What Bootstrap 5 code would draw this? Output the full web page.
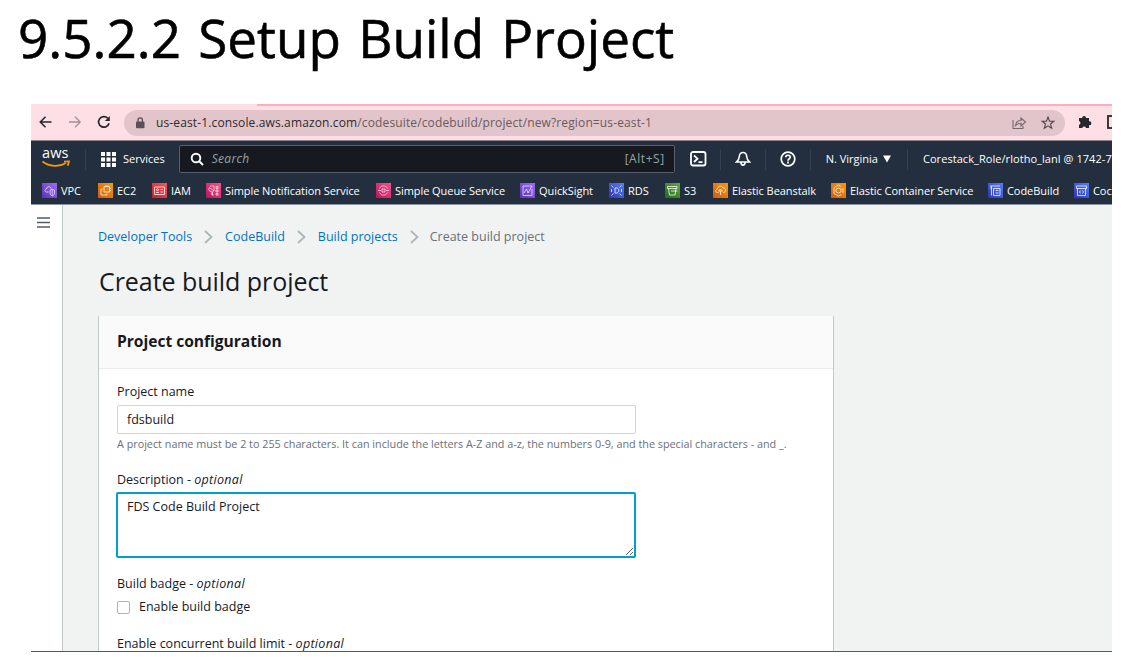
<!DOCTYPE html>
<html lang="en">
<head>
<meta charset="utf-8">
<title>Setup Build Project</title>
<link href="https://cdn.jsdelivr.net/npm/bootstrap@5.3.0/dist/css/bootstrap.min.css" rel="stylesheet">
<style>
body{font-family:"Open Sans","Noto Sans",sans-serif;font-size:12.5px;line-height:18px;color:#16191f;background:#fff;overflow:hidden}
svg{display:block;flex:none}
.slide-title{font-size:53px;font-weight:500;line-height:76px;height:104px;padding-left:18px;color:#000;white-space:nowrap;word-spacing:3.5px;-webkit-text-stroke:.6px #000}
.shot{margin-left:31px;width:1081px;height:548px;border-bottom:1px solid #545b64;white-space:nowrap}
.browser{height:36px;background:linear-gradient(90deg,transparent 226px,#ffadba 226px) top/100% 2px no-repeat #ffdfe6;padding-left:7px}
.address{flex:none;width:941px;height:26px;border-radius:13px;background:#e1c5ca;font-size:12px;letter-spacing:.13px;color:#6a5a5e;margin-left:12px;margin-top:2px;padding:0 9px 0 10px}
.aws{background:#232f3e;border-top:1px solid #8b7f8b;border-bottom:1px solid #8d96a0;height:65px;color:#fff;font-weight:500;font-size:11px}
.top-row{height:36px}
.top-row>*{flex:none}
.logo{width:30px;height:26px;margin-left:10px;font-size:14.5px;line-height:14px;letter-spacing:.1px;padding-left:1px}
.logo svg{margin-left:-1px}
.find{width:496px;height:28px;margin-left:14px;background:#161a20;border:1px solid #56616e;border-radius:2px;padding:0 9px 0 10px;font-size:12px;font-weight:400;color:#95a5a6}
.rule{width:1px;height:21px;background:#35414e}
.favs{height:27px;grid-template-columns:56px 54px 54px 170px 144px 89px 56px 48px 118px 157px 86px 38px;padding-left:11px;padding-top:6px;letter-spacing:-.06px}
.favs>span{display:flex;align-items:center;height:15px}
.favs svg{margin-right:4px;stroke-opacity:.85}
.side{width:32px;border-right:1px solid #c3c8c8;padding:12px 0 0 6px}
.main{background:#f1f3f3;padding:23px 0 0 35px}
.crumbs a{color:#0073bb;text-decoration:none}
.crumbs{color:#687078;height:18px}
.crumbs svg{margin:0 12px}
.crumbs svg:last-of-type{margin-right:11px}
em{letter-spacing:.3px}
h1{font-size:25px;font-weight:400;line-height:34px;margin:18px 0 18px 1px;letter-spacing:-.05px}
.panel{width:736px;height:335px;border:1px solid #c3c8c8;border-width:0 1px;background:#fff}
.panel-head{height:53px;background:#fafafa;border-bottom:1px solid #eaeded;padding:16px 18px;font-size:15.6px;font-weight:700;letter-spacing:-.02px}
.panel-body{padding:14px 18px 0}
.panel-body .form-control{width:519px;font-size:12.5px;line-height:18px;color:#16191f;border-radius:2px;padding:4px 9px}
.name-box{height:29px;border-color:#cfd5d9;margin-top:4px}
.panel-body .desc-box{width:520px;height:66px;margin:3px 0 0 -1px;border:2px solid #00a1c9;box-shadow:none;padding:4px 9px 2px}
.hint{font-size:10.8px;line-height:16px;color:#687078;margin-top:2px}
.panel-body .form-check-input{width:13px;height:13px;margin:0;border:1px solid #aab7b8;border-radius:2px}
</style>
</head>
<body>
<div class="slide-title">9.5.2.2 Setup Build Project</div>
<div class="shot d-flex flex-column overflow-hidden">
  <div class="browser d-flex align-items-center flex-shrink-0">
    <svg width="16" height="16" viewBox="0 0 16 16" fill="none" stroke="#25282d" stroke-width="1.6"><path d="M13.500 8H2.500M7.500 2.800 2.300 8l5.200 5.200"/></svg>
    <svg style="margin:0 14px 0 14px" width="14" height="16" viewBox="0 0 14 16" fill="none" stroke="#a58f96" stroke-width="1.300"><path d="M1 8h11M7 2.800 12.200 8 7 13.200"/></svg>
    <svg width="16" height="16" viewBox="0 0 16 16"><path d="M13 9.200A5.300 5.300 0 1 1 11.800 4.300" fill="none" stroke="#25282d" stroke-width="1.700"/><path d="M13.800 2v5H8.800z" fill="#25282d"/></svg>
    <div class="address d-flex align-items-center">
      <svg width="12" height="14" viewBox="0 0 12 14"><rect x="2" y="5.500" width="8.500" height="6.800" rx="1" fill="#5b5055"/><path d="M4 6V4a2.200 2.200 0 0 1 4.400 0v2" fill="none" stroke="#5b5055" stroke-width="1.300"/></svg>
      <span class="me-auto" style="margin-left:10px"><span style="color:#33282c">us-east-1.console.aws.amazon.com</span>/codesuite/codebuild/project/new?region=us-east-1</span>
      <svg width="16" height="16" viewBox="0 0 16 16" fill="none" stroke="#75686c" stroke-width="1.100"><path d="M2 5v8.500h10V11M4.500 10.500c.5-3.500 2.500-5 5.500-5V3l4.500 4-4.500 4V8.300c-2.500 0-4 .7-5.500 2.200z"/></svg>
      <svg style="margin-left:13px" width="16" height="16" viewBox="0 0 16 16" fill="none" stroke="#51464a" stroke-width="1.100"><path d="m8 2 1.500 4.100 4.400.2-3.400 2.700 1.200 4.200L8 10.800l-3.700 2.400L5.500 9 2.100 6.300l4.400-.2z"/></svg>
    </div>
    <svg style="margin-left:12px" width="16" height="16" viewBox="0 0 16 16" fill="#25282d"><path d="M2 4h3.200a1.900 1.900 0 1 1 3.800 0H12v3.400a1.900 1.900 0 1 1 0 3.700V14H9a1.900 1.900 0 0 0-3.700 0H2v-3.200a1.900 1.900 0 0 0 0-3.700z"/></svg>
    <svg style="margin-left:14px" width="14" height="14" viewBox="0 0 14 14" fill="none" stroke="#25282d" stroke-width="1.800"><rect x="1" y="1" width="12" height="12"/></svg>
  </div>
  <div class="aws flex-shrink-0">
    <div class="top-row d-flex align-items-center">
      <div class="logo">aws<svg width="30" height="8" viewBox="0 0 30 8"><path d="M1.500 1.500c7 5.500 17 5.500 23.500 1.500M23 1.500l5-.2-1.300 4.500" fill="none" stroke="#f90" stroke-width="1.700"/></svg></div>
      <span class="rule" style="margin-left:14px"></span>
      <svg style="margin:0 7px 0 15px" width="15" height="15" viewBox="0 0 15 15" fill="#fff"><path d="M0 0h4v4H0zM5.500 0h4v4h-4zM11 0h4v4h-4zM0 5.500h4v4H0zM5.500 5.500h4v4h-4zM11 5.500h4v4h-4zM0 11h4v4H0zM5.500 11h4v4h-4zM11 11h4v4h-4z"/></svg>
      <span>Services</span>
      <div class="find d-flex align-items-center">
        <svg width="14" height="14" viewBox="0 0 14 14" fill="none" stroke="#fff" stroke-width="1.900"><circle cx="6" cy="6" r="4.300"/><path d="m9 9 4 4"/></svg>
        <em class="ms-2 me-auto">Search</em><span style="letter-spacing:.55px">[Alt+S]</span>
      </div>
      <svg style="margin-left:15px" width="17" height="16" viewBox="0 0 17 16" fill="none" stroke="#fff" stroke-width="1.800"><rect x="1" y="1" width="14.500" height="13.500" rx="2"/><path d="m4 4.500 3.500 3.200L4 11M8.500 11.200h4"/></svg>
      <span class="rule" style="margin-left:13px"></span>
      <svg style="margin-left:14px" width="16" height="16" viewBox="0 0 16 16" fill="none" stroke="#fff" stroke-width="1.600"><path d="M8 1.500c-2.500 0-3.500 1.700-3.700 4C4.100 8 3.500 9.500 1.500 11h13c-2-1.500-2.600-3-2.800-5.500-.2-2.300-1.200-4-3.700-4zM6 11.500c0 3.500 4 3.500 4 0"/></svg>
      <span class="rule" style="margin-left:14px"></span>
      <svg style="margin-left:14px" width="16" height="16" viewBox="0 0 16 16" fill="none" stroke="#fff" stroke-width="1.700"><circle cx="8" cy="8" r="6.800"/><path d="M5.700 6.300C5.700 3.500 10.300 3.600 10.300 6.300 10.300 7.800 8 7.800 8 9.700M8 10.600v1.800"/></svg>
      <span class="rule" style="margin-left:14px"></span>
      <span style="margin-left:15px">N. Virginia</span>
      <svg style="margin-left:5px" width="8" height="8" viewBox="0 0 8 8" fill="#fff"><path d="M0 .5h8L4 7.500z"/></svg>
      <span class="rule" style="margin-left:16px"></span>
      <span style="margin-left:15px;letter-spacing:.06px">Corestack_Role/rlotho_lanl @ 1742-7</span>
    </div>
    <svg width="0" height="0" class="position-absolute">
      <defs>
        <linearGradient id="violet" x1="0" y1="1" x2="1" y2="0"><stop stop-color="#5a32b0"/><stop offset="1" stop-color="#9f6bff"/></linearGradient>
        <linearGradient id="amber" x1="0" y1="1" x2="1" y2="0"><stop stop-color="#cf5a17"/><stop offset="1" stop-color="#ff9900"/></linearGradient>
        <linearGradient id="crimson" x1="0" y1="1" x2="1" y2="0"><stop stop-color="#c4202e"/><stop offset="1" stop-color="#ff5257"/></linearGradient>
        <linearGradient id="rose" x1="0" y1="1" x2="1" y2="0"><stop stop-color="#b8145a"/><stop offset="1" stop-color="#ff4f8b"/></linearGradient>
        <linearGradient id="cobalt" x1="0" y1="1" x2="1" y2="0"><stop stop-color="#2e35b4"/><stop offset="1" stop-color="#527fff"/></linearGradient>
        <linearGradient id="leaf" x1="0" y1="1" x2="1" y2="0"><stop stop-color="#1f6b1c"/><stop offset="1" stop-color="#62a93a"/></linearGradient>
      </defs>
    </svg>
    <div class="favs d-grid">
      <span><svg width="15" height="15" viewBox="0 0 15 15" fill="none" stroke="#fff" stroke-width=".8"><path d="M0 0h15v15H0z" fill="url(#violet)" stroke="none"/><path d="M6.500 9H4.500c-2 0-2-3 0-3 .5-3 4-3 4.500-.5M8 7.200l2.200-1 2.300 1v3c0 1.500-1 2-2.300 2.800C9 12.200 8 11.700 8 10.200zM10.200 6.500v6"/></svg>VPC</span>
      <span><svg width="15" height="15" viewBox="0 0 15 15" fill="none" stroke="#fff" stroke-width=".9"><path d="M0 0h15v15H0z" fill="url(#amber)" stroke="none"/><path d="M6 3.500h5.500V9H6zM4.500 6H3v6h6v-1.500M8 2.300v1M10 2.300v1M12 5.500h1M12 7.500h1"/></svg>EC2</span>
      <span><svg width="15" height="15" viewBox="0 0 15 15" fill="none" stroke="#fff" stroke-width=".9"><path d="M0 0h15v15H0z" fill="url(#crimson)" stroke="none"/><path d="M2.500 4h10v7.500h-10zM4 9.500h3M8.500 6.500h2.500M8.500 9h2.500"/><circle cx="5.500" cy="6.800" r="1"/></svg>IAM</span>
      <span><svg width="15" height="15" viewBox="0 0 15 15" fill="none" stroke="#fff" stroke-width=".8"><path d="M0 0h15v15H0z" fill="url(#rose)" stroke="none"/><path d="M8 3C4 2 2.500 5 3 7.500L6 9v3M4 5l4 3V3M7 8l-1 4h2M10 3.500h2v2h-2zM10 7h2v2h-2zM10 10.500h2v1.500h-2z"/></svg>Simple Notification Service</span>
      <span><svg width="15" height="15" viewBox="0 0 15 15" fill="none" stroke="#fff" stroke-width=".8"><path d="M0 0h15v15H0z" fill="url(#rose)" stroke="none"/><path d="M3.500 5.500c1.500-3.500 6.500-3.500 8 0M3.500 9.500c1.500 3.500 6.500 3.500 8 0M2 7.500h3M10 7.500h3M6 6h3v3H6z"/></svg>Simple Queue Service</span>
      <span><svg width="15" height="15" viewBox="0 0 15 15" fill="none" stroke="#fff" stroke-width=".8"><path d="M0 0h15v15H0z" fill="url(#violet)" stroke="none"/><path d="M9 3H3v9.500h9V6M4 10l2.500-4L8 10l4-7M9.500 3H12"/></svg>QuickSight</span>
      <span><svg width="15" height="15" viewBox="0 0 15 15" fill="none" stroke="#fff" stroke-width=".9"><path d="M0 0h15v15H0z" fill="url(#cobalt)" stroke="none"/><path d="M6 5h1.500c3 0 3 5 0 5H6zM2.500 2.500l2 2M12.500 2.500l-2 2M2.500 12.500l2-2M12.500 12.500l-2-2M2.500 6v3M12.500 6v3"/></svg>RDS</span>
      <span><svg width="15" height="15" viewBox="0 0 15 15" fill="none" stroke="#fff" stroke-width=".9"><path d="M0 0h15v15H0z" fill="url(#leaf)" stroke="none"/><path d="M2.500 3.500h9.500v2H2.500zM3.500 5.500l1 6.500h5.500l1-6.500M6 8h6.500"/></svg>S3</span>
      <span><svg width="15" height="15" viewBox="0 0 15 15" fill="none" stroke="#fff" stroke-width=".9"><path d="M0 0h15v15H0z" fill="url(#amber)" stroke="none"/><path d="M5.500 9.500h-1c-2.500 0-2.500-3 0-3.500.5-4 5-3.500 5.500-1 3.500 0 3.500 4.500 0 4.500M7.500 6 5.500 8h4zM7.500 8v4"/></svg>Elastic Beanstalk</span>
      <span><svg width="15" height="15" viewBox="0 0 15 15" fill="none" stroke="#fff" stroke-width=".9"><path d="M0 0h15v15H0z" fill="url(#amber)" stroke="none"/><path d="M10.500 11.500 7.500 13 3 10.500v-6L7.500 2 10 3.500M7.500 5 10 6.200v2.600L7.500 10 5 8.800V6.200zM12 5v5"/></svg>Elastic Container Service</span>
      <span><svg width="15" height="15" viewBox="0 0 15 15" fill="none" stroke="#fff" stroke-width=".9"><path d="M0 0h15v15H0z" fill="url(#cobalt)" stroke="none"/><path d="M2 3h10M3.500 3v9.500M5.500 5.500v7h6.500v-7zM7.500 7.500h3M7.500 10h3M2 5h2"/></svg>CodeBuild</span>
      <span><svg width="15" height="15" viewBox="0 0 15 15" fill="none" stroke="#fff" stroke-width=".9"><path d="M0 0h15v15H0z" fill="url(#cobalt)" stroke="none"/><path d="M2.500 3h10v2.500h-10zM3.500 5.500v7h8v-7M6.500 7.500l-1 1.500 1 1.500M8.500 7.500l1 1.500-1 1.500"/></svg>Coc</span>
    </div>
  </div>
  <div class="d-flex flex-grow-1">
    <div class="side flex-shrink-0"><svg width="13" height="11" viewBox="0 0 13 11" stroke="#545b64" stroke-width="1.700"><path d="M0 1h13M0 5.500h13M0 10h13"/></svg></div>
    <div class="main flex-grow-1">
      <div class="crumbs d-flex align-items-center">
        <a href="#">Developer Tools</a>
        <svg width="9" height="14" viewBox="0 0 9 14" fill="none" stroke="#aab7b8" stroke-width="1.800"><path d="m1 1 6.500 6L1 13"/></svg>
        <a href="#">CodeBuild</a>
        <svg width="9" height="14" viewBox="0 0 9 14" fill="none" stroke="#aab7b8" stroke-width="1.800"><path d="m1 1 6.500 6L1 13"/></svg>
        <a href="#">Build projects</a>
        <svg width="9" height="14" viewBox="0 0 9 14" fill="none" stroke="#aab7b8" stroke-width="1.800"><path d="m1 1 6.500 6L1 13"/></svg>
        <span>Create build project</span>
      </div>
      <h1>Create build project</h1>
      <div class="panel">
        <div class="panel-head">Project configuration</div>
        <div class="panel-body">
          <div>Project name</div>
          <input class="form-control name-box" value="fdsbuild" aria-label="Project name">
          <div class="hint">A project name must be 2 to 255 characters. It can include the letters A-Z and a-z, the numbers 0-9, and the special characters - and _.</div>
          <div style="margin-top:19px">Description - <em>optional</em></div>
          <textarea class="form-control desc-box" aria-label="Description">FDS Code Build Project</textarea>
          <div style="margin-top:17px">Build badge - <em>optional</em></div>
          <div class="d-flex align-items-center" style="margin-top:5px"><input type="checkbox" class="form-check-input" id="badge"><label for="badge" style="margin-left:9px">Enable build badge</label></div>
          <div style="margin-top:19px">Enable concurrent build limit - <em>optional</em></div>
        </div>
      </div>
    </div>
  </div>
</div>
</body>
</html>
